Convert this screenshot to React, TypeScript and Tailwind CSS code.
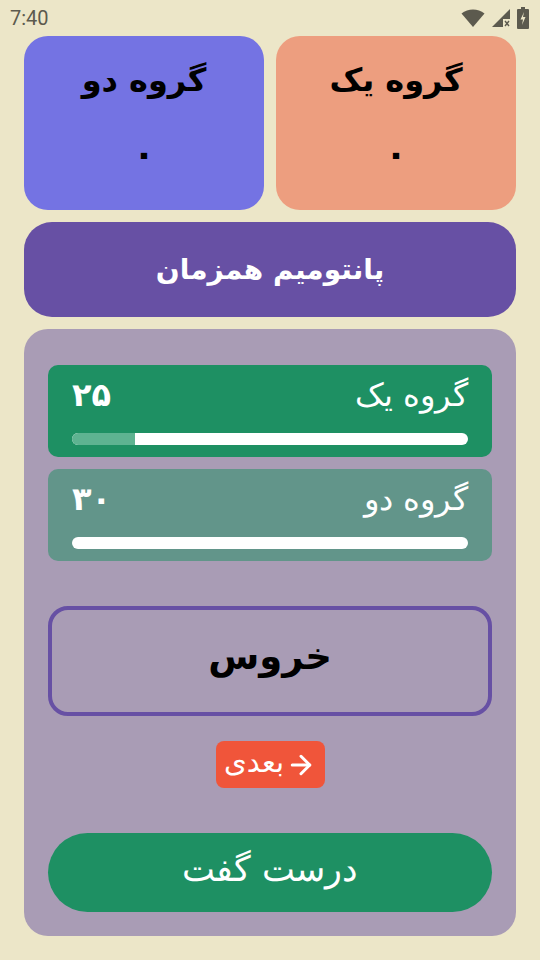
import React from 'react';
import { ArrowRight } from 'lucide-react';

const fa = { fontFamily: '"DejaVu Sans", "Noto Sans", sans-serif' };

const StatusBar = () => (
  <div className="h-[36px] flex items-center justify-between px-[10px]" dir="ltr">
    <span className="text-[20px] text-[#5c5a4e]" style={{ fontFamily: 'Roboto, sans-serif' }}>
      7:40
    </span>
    <div className="flex items-center gap-[6px] pr-[1px]">
      <svg width="24" height="20" viewBox="0 0 24 20">
        <path d="M12 19 L0.5 5.5 C7 0 17 0 23.5 5.5 Z" fill="#5c5a4e" />
      </svg>
      <svg width="20" height="20" viewBox="0 0 20 20">
        <path d="M19 1 V11 H12 V19 H1 Z" fill="#5c5a4e" />
        <path d="M14 13 L18 18 M18 13 L14 18" stroke="#5c5a4e" strokeWidth="1.4" />
      </svg>
      <svg width="12" height="22" viewBox="0 0 12 22">
        <rect x="4" y="0" width="4" height="3" fill="#5c5a4e" />
        <rect x="0" y="2" width="12" height="20" rx="1" fill="#5c5a4e" />
        <path d="M7 5 L3.5 12.5 H6 L5 18 L8.5 10 H6 Z" fill="#ece6c8" />
      </svg>
    </div>
  </div>
);

const ScoreCard = ({ title, score, color }: { title: string; score: string; color: string }) => (
  <div className={`flex-1 h-[174px] rounded-[24px] ${color} flex flex-col items-center pt-[24px]`}>
    <span className="text-[32px] font-bold text-black leading-[40px]">{title}</span>
    <span className="text-[36px] font-bold text-black leading-[40px] mt-[34px]">{score}</span>
  </div>
);

const TeamRow = ({
  name,
  time,
  bg,
  fill,
}: {
  name: string;
  time: string;
  bg: string;
  fill: number;
}) => (
  <div className={`h-[92px] rounded-[10px] ${bg} px-[24px] pt-[8px] flex flex-col`}>
    <div className="flex items-center justify-between h-[44px]">
      <span className="text-[32px] text-white font-light leading-none">{name}</span>
      <span className="text-[32px] text-white font-bold leading-none">{time}</span>
    </div>
    <div className="mt-[16px] h-[12px] rounded-full bg-white overflow-hidden flex" dir="ltr">
      <div className="h-full bg-[#5eb391]" style={{ width: `${fill}%` }} />
    </div>
  </div>
);

export default function App() {
  return (
    <div className="w-[540px] h-[960px] bg-[#ece6c8] overflow-hidden" style={fa}>
      <StatusBar />
      <div className="px-[24px] flex flex-col" dir="rtl">
        <div className="flex gap-[12px]">
          <ScoreCard title="گروه یک" score="۰" color="bg-[#ed9e7f]" />
          <ScoreCard title="گروه دو" score="۰" color="bg-[#7473e3]" />
        </div>

        <div className="mt-[12px] h-[95px] rounded-[28px] bg-[#6750a4] flex items-center justify-center">
          <span className="text-[28px] font-bold text-white">پانتومیم همزمان</span>
        </div>

        <div className="mt-[12px] h-[607px] rounded-[24px] bg-[#a99cb5] px-[24px] pt-[36px] flex flex-col">
          <div className="flex flex-col gap-[12px]">
            <TeamRow name="گروه یک" time="۲۵" bg="bg-[#1e9063]" fill={16} />
            <TeamRow name="گروه دو" time="۳۰" bg="bg-[#62958a]" fill={0} />
          </div>

          <div className="mt-[45px] h-[110px] rounded-[20px] border-[4px] border-[#6750a4] flex items-center justify-center pb-[8px]">
            <span className="text-[37px] font-bold text-black">خروس</span>
          </div>

          <div className="mt-[25px] flex justify-center">
            <button className="h-[47px] w-[109px] rounded-[8px] bg-[#f0553a] flex items-center justify-center gap-[2px] text-white">
              <ArrowRight className="w-[30px] h-[30px] shrink-0" strokeWidth={2.4} />
              <span className="text-[29px] leading-none pb-[4px]">بعدی</span>
            </button>
          </div>

          <button className="mt-[45px] h-[79px] rounded-full bg-[#1e9063] flex items-center justify-center text-white pb-[6px]">
            <span className="text-[35px] font-light">درست گفت</span>
          </button>
        </div>
      </div>
    </div>
  );
}
